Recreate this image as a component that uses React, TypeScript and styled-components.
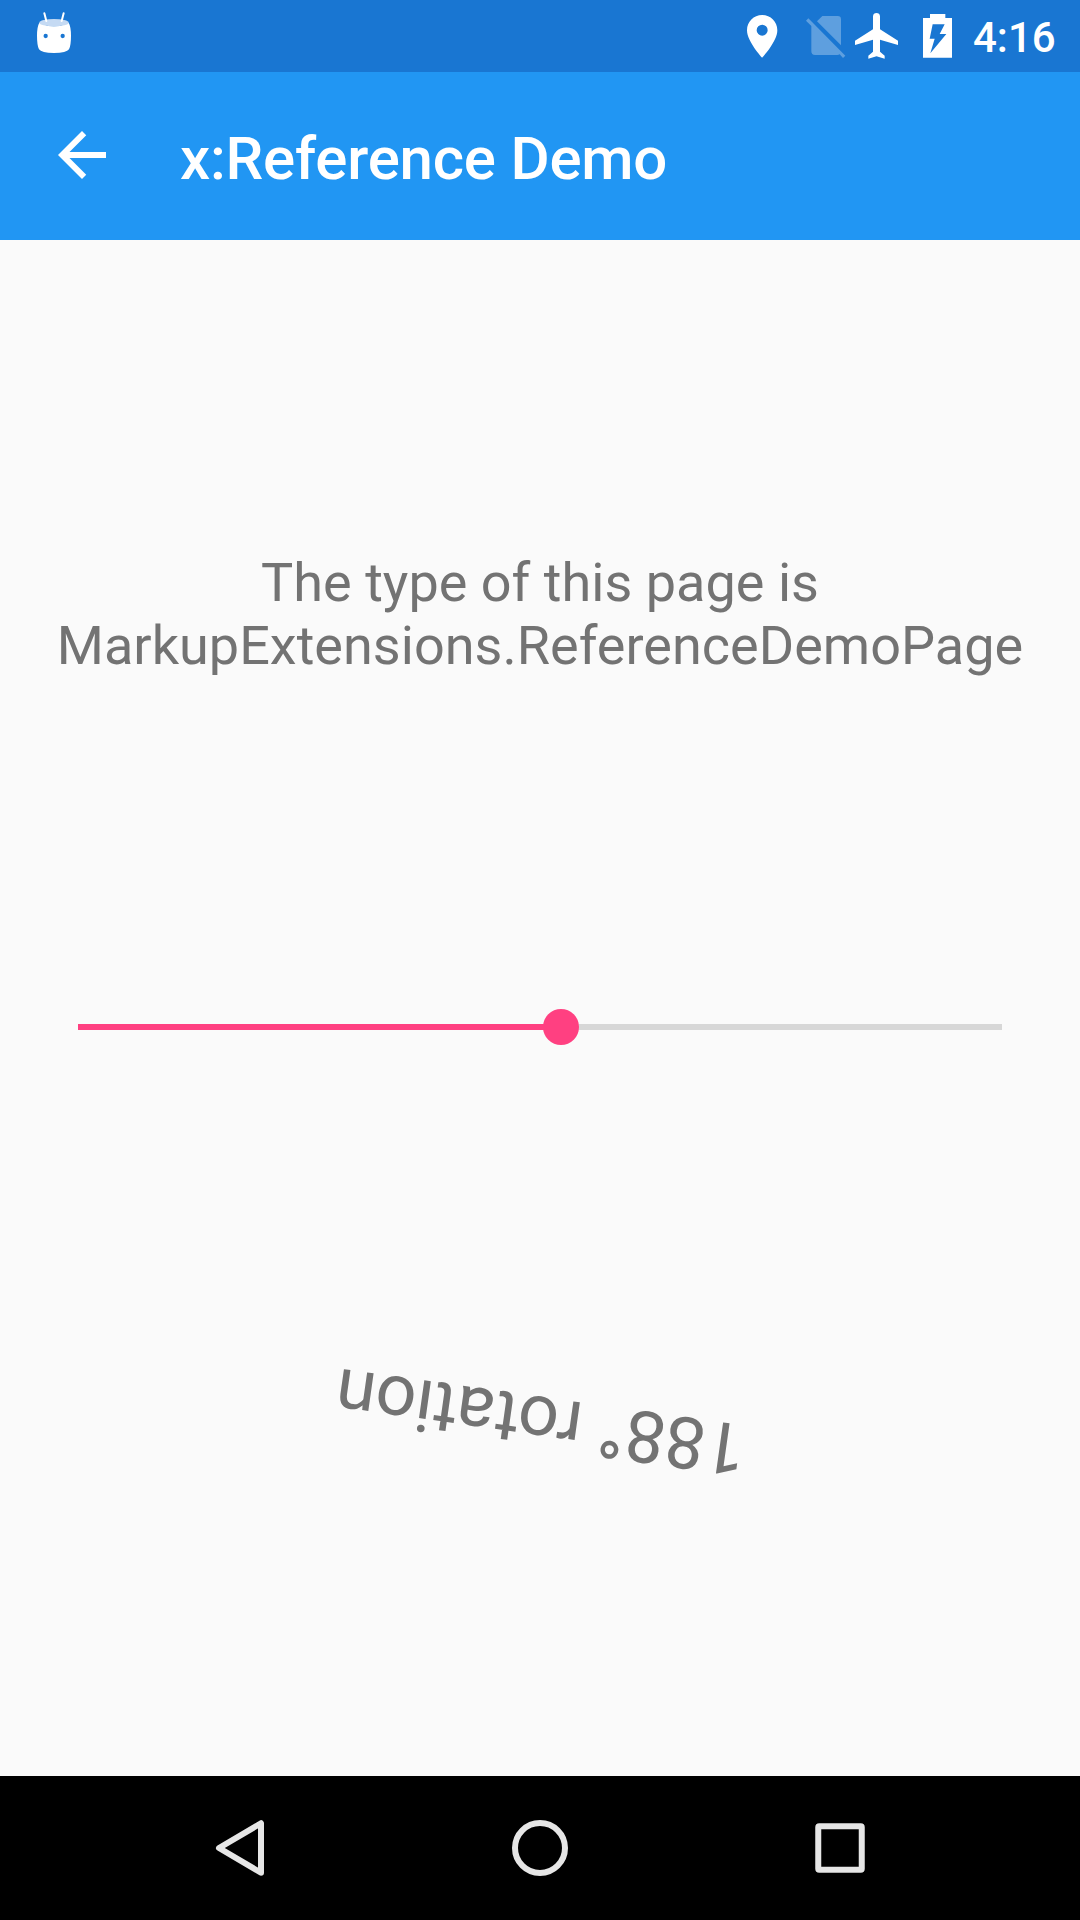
import React, { useState } from "react";
import styled, { createGlobalStyle } from "styled-components";

const GlobalStyle = createGlobalStyle`
  * { box-sizing: border-box; }
  html, body { margin: 0; padding: 0; }
  body { font-family: Roboto, "Noto Sans", sans-serif; background: #fafafa; }
`;

const Screen = styled.div`
  display: flex;
  flex-direction: column;
  width: 1080px;
  height: 1920px;
  overflow: hidden;
  background: #fafafa;
`;

const StatusBar = styled.header`
  display: flex;
  justify-content: space-between;
  align-items: center;
  height: 72px;
  padding: 0 24px 0 34px;
  background: #1976d2;
  color: #fff;
`;

const StatusGroup = styled.div`
  display: flex;
  align-items: center;
  height: 100%;
`;

const StatusIcon = styled.svg<{ $width: number; $gap?: number }>`
  display: block;
  flex: none;
  width: ${(p) => p.$width}px;
  height: 72px;
  margin-right: ${(p) => p.$gap ?? 0}px;
  fill: #fff;
`;

const Clock = styled.time`
  font-size: 42px;
  font-weight: 500;
  line-height: 50px;
  width: 83px;
  padding-top: 4px;
  white-space: nowrap;
`;

const Toolbar = styled.div`
  display: flex;
  align-items: center;
  height: 168px;
  padding-left: 46px;
  background: #2196f3;
  color: #fff;
`;

const BackButton = styled.button`
  display: flex;
  width: 72px;
  height: 72px;
  padding: 0;
  margin: 0 62px 3px 0;
  border: 0;
  background: none;
  color: inherit;
`;

const Title = styled.h1`
  margin: 0;
  padding-top: 6px;
  font-size: 60px;
  font-weight: 500;
  line-height: 70px;
  letter-spacing: -0.22px;
`;

const Page = styled.main`
  display: flex;
  flex-direction: column;
  height: 1536px;
`;

const Section = styled.section<{ $height: number }>`
  display: flex;
  align-items: center;
  justify-content: center;
  height: ${(p) => p.$height}px;
`;

const TypeLabel = styled.p`
  margin: 0;
  color: #737373;
  font-size: 54px;
  line-height: 63px;
  letter-spacing: 0.02px;
  text-align: center;
`;

const Track = styled.div`
  display: flex;
  align-items: center;
  width: 924px;
  height: 36px;
`;

const Filled = styled.div`
  height: 6px;
  margin-right: -18px;
  background: #ff4081;
`;

const Thumb = styled.div`
  flex: none;
  width: 36px;
  height: 36px;
  border-radius: 50%;
  background: #ff4081;
  z-index: 1;
`;

const Remaining = styled.div`
  flex: 1;
  height: 6px;
  margin-left: -18px;
  background: #d7d7d7;
`;

const RotatedLabel = styled.p`
  margin: 0 0 1px 2px;
  color: #737373;
  font-size: 72px;
  line-height: 84px;
  letter-spacing: -0.18px;
  white-space: nowrap;
`;

const NavBar = styled.nav`
  display: flex;
  justify-content: center;
  height: 144px;
  background: #000;
`;

const NavButton = styled.button`
  display: flex;
  align-items: center;
  justify-content: center;
  width: 300px;
  padding: 0;
  border: 0;
  background: none;
  svg {
    fill: none;
    stroke: #e6e6e6;
    stroke-width: 6;
    stroke-linejoin: round;
  }
`;

export default function App() {
  const [angle] = useState(188);
  return (
    <>
      <GlobalStyle />
      <Screen>
        <StatusBar>
          <StatusGroup>
            <StatusIcon $width={40} viewBox="102 0 120 216">
              <path d="M118 68Q162 90 206 68Q213 80 213 107Q213 136 207 148Q200 159 162 159Q124 159 117 148Q111 136 111 107Q111 80 118 68Z" />
              <ellipse cx="162" cy="68" rx="44" ry="11" fill="#c5daf3" />
              <path d="M133 40L139 63M191 40L185 63" stroke="#fff" strokeWidth="6" strokeLinecap="round" />
              <circle cx="137" cy="108" r="6.5" fill="#1976d2" />
              <circle cx="188" cy="108" r="6.5" fill="#1976d2" />
            </StatusIcon>
          </StatusGroup>
          <StatusGroup>
            <StatusIcon $width={32} $gap={27} viewBox="79 0 96 216">
              <path
                fillRule="evenodd"
                d="M127.500 45C102 45 82 65 82 90.500C82 124 127.500 173 127.500 173S173 124 173 90.500C173 65 153 45 127.500 45ZM127.500 107A16.500 16.500 0 1 1 127.500 74A16.500 16.500 0 0 1 127.500 107Z"
              />
            </StatusIcon>
            <StatusIcon $width={41} $gap={8} viewBox="253 0 123 216">
              <path
                fill="#5e9fdf"
                d="M305 48H351Q361 48 361 58V136L289 64ZM263 55L374 167L367 174L357 163Q354 165 350 165H283Q272 165 272 154V78L256 62Z"
              />
            </StatusIcon>
            <StatusIcon $width={44} $gap={23} viewBox="402 0 132 216">
              <path d="M459 49Q460 39 469.500 39Q479 39 480 49V88L534 122V135L480 119V155L494 167V176L469.500 169L445 176V167L459 155V119L405 135V122L459 88Z" />
            </StatusIcon>
            <StatusIcon $width={32} $gap={20} viewBox="603 0 96 216">
              <path fillRule="evenodd" d="M630 42H676V54H696V173H609V54H630ZM638 73L629 116H644L631 160L679 102H659L674 73Z" />
            </StatusIcon>
            <Clock>4:16</Clock>
          </StatusGroup>
        </StatusBar>
        <Toolbar>
          <BackButton aria-label="Back">
            <svg width="72" height="72" viewBox="0 0 24 24" fill="#fff">
              <path d="M20 11H7.830l5.590-5.590L12 4l-8 8 8 8 1.410-1.410L7.830 13H20v-2z" />
            </svg>
          </BackButton>
          <Title>x:Reference Demo</Title>
        </Toolbar>
        <Page>
          <Section $height={748}>
            <TypeLabel>
              The type of this page is
              <br />
              MarkupExtensions.ReferenceDemoPage
            </TypeLabel>
          </Section>
          <Section $height={78}>
            <Track>
              <Filled style={{ width: `${(angle / 360) * 100}%` }} />
              <Thumb />
              <Remaining />
            </Track>
          </Section>
          <Section $height={710}>
            <RotatedLabel style={{ transform: `rotate(${angle}deg)` }}>{angle}° rotation</RotatedLabel>
          </Section>
        </Page>
        <NavBar>
          <NavButton aria-label="Back">
            <svg width="60" height="60" viewBox="0 0 60 60">
              <path d="M51 5.250V54.750L9 30Z" />
            </svg>
          </NavButton>
          <NavButton aria-label="Home">
            <svg width="60" height="60" viewBox="0 0 60 60">
              <circle cx="30" cy="30" r="25" />
            </svg>
          </NavButton>
          <NavButton aria-label="Recent apps">
            <svg width="60" height="60" viewBox="0 0 60 60">
              <rect x="8.250" y="8.250" width="43.500" height="43.500" rx="1" />
            </svg>
          </NavButton>
        </NavBar>
      </Screen>
    </>
  );
}
